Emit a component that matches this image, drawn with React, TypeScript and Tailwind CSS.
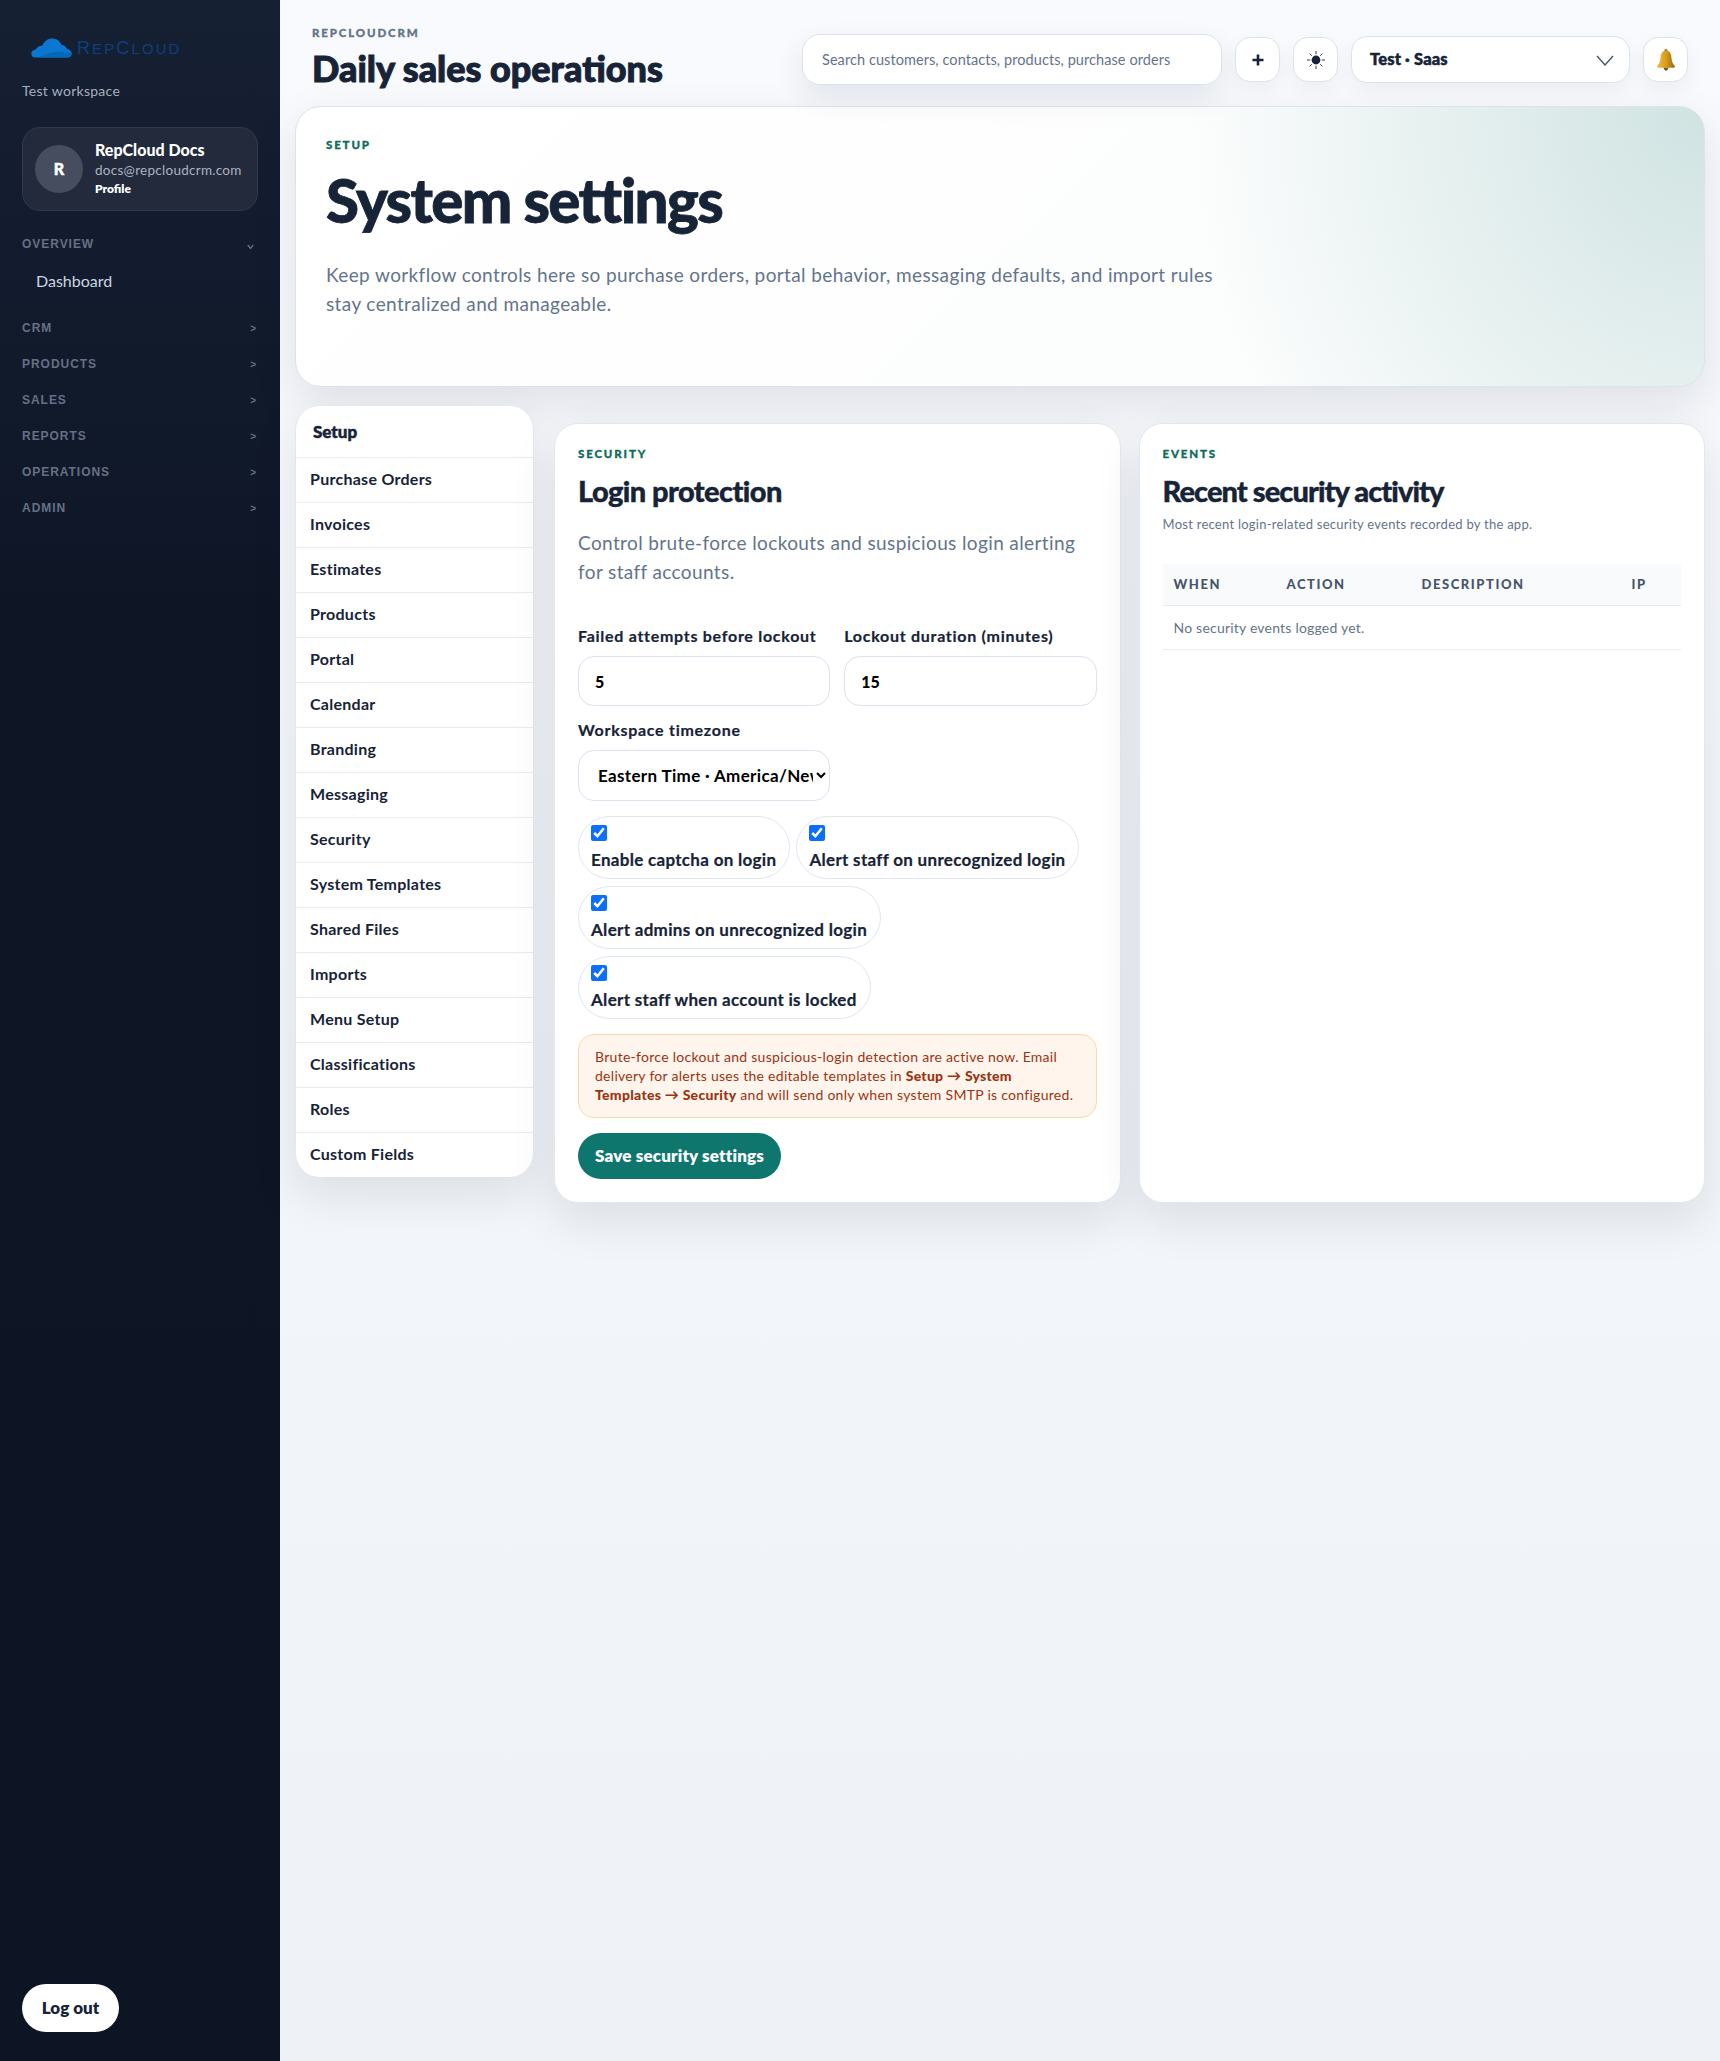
import React from "react";

const F = "font-['Lato','Noto_Sans',sans-serif]";
const navGroups = ["CRM", "PRODUCTS", "SALES", "REPORTS", "OPERATIONS", "ADMIN"];
const setupItems = ["Purchase Orders", "Invoices", "Estimates", "Products", "Portal", "Calendar", "Branding", "Messaging", "Security", "System Templates", "Shared Files", "Imports", "Menu Setup", "Classifications", "Roles", "Custom Fields"];
const CARD_SHADOW = "shadow-[0_18px_46px_rgba(15,23,42,0.1)]";

function Cloud() {
  return (
    <svg width="41" height="20" viewBox="0 0 41 20" className="shrink-0">
      <path d="M4 19.5C1.5 19.5 0.3 17.6 0.3 15.8 0.3 13.4 2.3 11.8 4.6 11.6 6.2 8.9 8.6 7.6 11.3 7.8 13 3 17 0.4 21.5 0.5 25.8 0.6 29 3 30.5 6.8 33 7 35 8.6 35.8 11 38.6 11.3 40.7 13.2 40.7 15.8 40.7 18 39 19.5 36.6 19.5Z" fill="#0a78d2" />
      <path d="M8 19.5C14 15.2 25 12.2 40.5 14.8 40.7 17.6 39 19.5 36.6 19.5Z" fill="#0668b8" />
    </svg>
  );
}

function Bell() {
  return (
    <svg width="24" height="24" viewBox="0 0 22 22">
      <defs>
        <linearGradient id="bellg" x1="0" y1="0" x2="1" y2="0">
          <stop offset="0" stopColor="#f2bd3a" />
          <stop offset="0.5" stopColor="#d99c1c" />
          <stop offset="1" stopColor="#96670d" />
        </linearGradient>
      </defs>
      <circle cx="11" cy="2.2" r="1.5" fill="#b9841a" />
      <path d="M11 2.5C7.6 2.5 6.4 5 6.1 8 5.8 11.6 5.2 14.3 3 16.4 2.5 17 2.8 18 3.8 18H18.2C19.2 18 19.5 17 19 16.4 16.8 14.3 16.2 11.6 15.9 8 15.6 5 14.4 2.5 11 2.5Z" fill="url(#bellg)" />
      <path d="M8.8 18.2C9 19.8 9.9 20.8 11 20.8 12.1 20.8 13 19.8 13.2 18.2Z" fill="#7d540e" />
    </svg>
  );
}

function Sun() {
  return (
    <svg width="20" height="20" viewBox="0 0 20 20">
      <circle cx="10" cy="10" r="4.4" fill="#172337" />
      <path d="M10 1V4.2M10 15.8V19M1 10H4.2M15.8 10H19M3.6 3.6L5.7 5.7M14.3 14.3L16.4 16.4M3.6 16.4L5.7 14.3M14.3 5.7L16.4 3.6" stroke="#172337" strokeWidth="0.9" />
    </svg>
  );
}

function Eyebrow({ children }: { children: React.ReactNode }) {
  return <div className="text-[11.5px] leading-[16px] font-black tracking-[0.16em] uppercase text-[#0f6b5c] [-webkit-text-stroke:0.3px_currentColor]">{children}</div>;
}

function Check({ label }: { label: string }) {
  return (
    <label className="inline-flex h-[63px] pl-[12px] pr-[13px] pt-[8px] rounded-[32px] border border-[#dfe6ef] bg-white">
      <div className="flex flex-col gap-[9px]">
        <input type="checkbox" defaultChecked className="m-0 w-[16px] h-[16px] accent-[#0b6ffb]" />
        <span className="text-[17px] leading-[20px] font-bold text-[#172337] whitespace-nowrap tracking-[0.018em] [-webkit-text-stroke:0.2px_currentColor]">{label}</span>
      </div>
    </label>
  );
}

function GroupChevron() {
  return <span className="text-[10px] font-bold tracking-normal pr-[2px] text-[#667085]">&gt;</span>;
}

export default function App() {
  return (
    <div className={`${F} flex w-full min-h-[2061px] bg-[linear-gradient(180deg,#f8fafd_0%,#eef2f7_100%)]`}>
      <aside className="w-[280px] shrink-0 min-h-[2061px] flex flex-col justify-between px-[22px] pt-[38px] pb-[29px] bg-[linear-gradient(180deg,#162033_0%,#0e1626_30%,#0d1424_100%)]">
        <div>
          <div className="flex items-center gap-[5px] h-[20px] pl-[9px]">
            <Cloud />
            <span className="font-['Liberation_Sans',sans-serif] text-[15px] leading-[20px] tracking-[0.14em] text-[#0b3f7d] whitespace-nowrap"><span className="text-[18px]">R</span>EP<span className="text-[18px]">C</span>LOUD</span>
          </div>
          <div className="mt-[24px] text-[14px] leading-[18px] text-[#a4afc0] tracking-[0.02em]">Test workspace</div>
          <div className="mt-[27px] h-[84px] flex items-center gap-[12px] pl-[12px] rounded-[18px] border border-[#303a4c] bg-[#222a3c]">
            <div className="w-[48px] h-[48px] rounded-full bg-[#454d5e] flex items-center justify-center text-white text-[16px] font-black [-webkit-text-stroke:0.5px_currentColor]">R</div>
            <div className="flex flex-col">
              <div className="text-[16px] leading-[20px] font-black text-white">RepCloud Docs</div>
              <div className="text-[13.5px] leading-[20px] text-[#a9b3c3] tracking-[0.02em]">docs@repcloudcrm.com</div>
              <div className="text-[12px] leading-[18px] font-extrabold text-white">Profile</div>
            </div>
          </div>
          <div className="mt-[25px] h-[16px] flex items-center justify-between pr-[4px] font-['Liberation_Sans',sans-serif] text-[12px] font-bold tracking-[0.08em] text-[#667085]">
            <span>OVERVIEW</span>
            <svg width="7" height="6" viewBox="0 0 7 6" className="mt-[6px]"><path d="M0.8 1L3.5 4.4L6.2 1" stroke="#667085" strokeWidth="1.3" fill="none" /></svg>
          </div>
          <div className="mt-[18px] pl-[14px] h-[22px] text-[16px] leading-[22px] text-[#cbd5e1]">Dashboard</div>
          <div className="mt-[18px] flex flex-col">
            {navGroups.map((g) => (
              <div key={g} className="h-[36px] shrink-0 flex items-center justify-between font-['Liberation_Sans',sans-serif] text-[12px] font-bold tracking-[0.08em] text-[#667085]">
                <span>{g}</span>
                <GroupChevron />
              </div>
            ))}
          </div>
        </div>
        <button className="w-[97px] h-[48px] rounded-full bg-white text-[#172337] text-[17px] font-extrabold">Log out</button>
      </aside>

      <main className="flex-1 min-w-0 px-[15px]">
        <header className="h-[106px] flex items-start pl-[17px] pr-[17px]">
          <div className="pt-[25px] flex-1">
            <div className="text-[11.5px] leading-[16px] font-black tracking-[0.16em] text-[#64748b] [-webkit-text-stroke:0.3px_currentColor]">REPCLOUDCRM</div>
            <div className="mt-[5px] text-[36px] leading-[44px] font-black tracking-normal text-[#172337] [-webkit-text-stroke:1px_currentColor] whitespace-nowrap">Daily sales operations</div>
          </div>
          <div className="flex items-center gap-[13px] pt-[34px] h-[85px]">
            <input placeholder="Search customers, contacts, products, purchase orders" className="w-[420px] h-[51px] px-[19px] rounded-[18px] border border-[#dbe3ee] bg-white text-[14.5px] tracking-[0.005em] outline-none placeholder:text-[#64748b] shadow-[0_12px_30px_rgba(15,23,42,0.09)]" />
            <button className="w-[45px] h-[45px] rounded-[15px] border border-[#dbe3ee] bg-white flex items-center justify-center shadow-[0_8px_20px_rgba(15,23,42,0.05)]">
              <svg width="14" height="14" viewBox="0 0 14 14"><path d="M7 1.5V12.5M1.5 7H12.5" stroke="#172337" strokeWidth="2.6" /></svg>
            </button>
            <button className="w-[45px] h-[45px] rounded-[15px] border border-[#dbe3ee] bg-white flex items-center justify-center shadow-[0_8px_20px_rgba(15,23,42,0.05)]"><Sun /></button>
            <div className="w-[279px] h-[47px] pl-[18px] pr-[15px] rounded-[16px] border border-[#dbe3ee] bg-white flex items-center justify-between shadow-[0_8px_20px_rgba(15,23,42,0.05)]">
              <span className="text-[16.5px] font-black text-[#172337] [-webkit-text-stroke:0.5px_currentColor] tracking-[0.01em]">Test · Saas</span>
              <svg width="18" height="11" viewBox="0 0 18 11" className="mt-[2px]"><path d="M1 1L9 10L17 1" stroke="#475569" strokeWidth="1.4" fill="none" /></svg>
            </div>
            <button className="w-[45px] h-[45px] rounded-[15px] border border-[#dbe3ee] bg-white flex items-center justify-center shadow-[0_8px_20px_rgba(15,23,42,0.05)]"><Bell /></button>
          </div>
        </header>

        <section className={`h-[281px] rounded-[26px] border border-[#dbe3ee] pt-[30px] pl-[30px] bg-[radial-gradient(ellipse_520px_560px_at_100%_0%,rgba(15,118,110,0.19),rgba(15,118,110,0)_100%),linear-gradient(135deg,#ffffff,#fbfcfc)] ${CARD_SHADOW}`}>
          <Eyebrow>Setup</Eyebrow>
          <h1 className="mt-[11px] text-[60px] leading-[72px] font-black tracking-[-0.027em] text-[#172337] [-webkit-text-stroke:0.8px_currentColor]">System settings</h1>
          <p className="mt-[24px] w-[905px] text-[19px] leading-[29px] text-[#64748b] tracking-[0.02em]">Keep workflow controls here so purchase orders, portal behavior, messaging defaults, and import rules stay centralized and manageable.</p>
        </section>

        <div className="mt-[20px] flex items-start gap-[20px]">
          <nav className={`w-[239px] -mt-[1px] shrink-0 rounded-[24px] bg-white overflow-hidden border-x border-[#e3e8ef] ${CARD_SHADOW}`}>
            <div className="h-[51px] pl-[17px] flex items-center text-[17px] font-black text-[#172337] [-webkit-text-stroke:0.5px_currentColor]">Setup</div>
            {setupItems.map((s) => (
              <div key={s} className="h-[45px] border-t border-[#e8ecf2] pl-[14px] pb-[2px] flex items-center text-[16px] font-bold tracking-[0.017em] text-[#172337]">{s}</div>
            ))}
          </nav>

          <div className="flex-1 mt-[16px] grid grid-cols-2 gap-[18px] h-[780px]">
            <section className={`rounded-[24px] bg-white border border-[#e3e8ef] px-[23px] pt-[22px] ${CARD_SHADOW}`}>
              <Eyebrow>Security</Eyebrow>
              <h2 className="mt-[11px] text-[29px] leading-[36px] font-black tracking-[-0.02em] text-[#172337] [-webkit-text-stroke:0.4px_currentColor]">Login protection</h2>
              <p className="mt-[19px] text-[19px] leading-[29px] text-[#64748b] tracking-[0.02em]">Control brute-force lockouts and suspicious login alerting for staff accounts.</p>
              <div className="mt-[40px] grid grid-cols-2 gap-x-[14px]">
                <div>
                  <div className="text-[16px] leading-[20px] font-bold text-[#172337] tracking-[0.045em] whitespace-nowrap [-webkit-text-stroke:0.2px_currentColor]">Failed attempts before lockout</div>
                  <input defaultValue="5" className="mt-[10px] w-full h-[50px] px-[16px] rounded-[16px] border border-[#dbe3ee] text-[16px] font-black text-black outline-none" />
                </div>
                <div>
                  <div className="text-[16px] leading-[20px] font-bold text-[#172337] tracking-[0.045em] whitespace-nowrap [-webkit-text-stroke:0.2px_currentColor]">Lockout duration (minutes)</div>
                  <input defaultValue="15" className="mt-[10px] w-full h-[50px] px-[16px] rounded-[16px] border border-[#dbe3ee] text-[16px] font-black text-black outline-none" />
                </div>
                <div className="mt-[14px]">
                  <div className="text-[16px] leading-[20px] font-bold text-[#172337] tracking-[0.045em] [-webkit-text-stroke:0.2px_currentColor]">Workspace timezone</div>
                  <select className="mt-[10px] w-full h-[51px] pl-[15px] pr-0 rounded-[16px] border border-[#dbe3ee] bg-white text-[17px] font-bold tracking-[0.02em] text-black outline-none">
                    <option>Eastern Time · America/New_York</option>
                  </select>
                </div>
              </div>
              <div className="mt-[15px] flex flex-wrap gap-x-[6px] gap-y-[7px]">
                <Check label="Enable captcha on login" />
                <Check label="Alert staff on unrecognized login" />
                <Check label="Alert admins on unrecognized login" />
                <Check label="Alert staff when account is locked" />
              </div>
              <div className="mt-[15px] h-[84px] rounded-[16px] border border-[#fdd9a8] bg-[#fff5ec] px-[16px] pt-[12px] text-[14px] leading-[19px] text-[#9a3412] tracking-[0.02em]">
                Brute-force lockout and suspicious-login detection are active now. Email delivery for alerts uses the editable templates in <strong className="font-black">Setup → System Templates → Security</strong> and will send only when system SMTP is configured.
              </div>
              <button className="mt-[15px] w-[203px] h-[46px] rounded-full bg-[#0f766e] text-white text-[17px] font-extrabold tracking-[0.01em]">Save security settings</button>
            </section>

            <section className={`rounded-[24px] bg-white border border-[#e3e8ef] px-[23px] pt-[22px] ${CARD_SHADOW}`}>
              <Eyebrow>Events</Eyebrow>
              <h2 className="mt-[11px] text-[29px] leading-[36px] font-black tracking-[-0.032em] text-[#172337] [-webkit-text-stroke:0.4px_currentColor]">Recent security activity</h2>
              <p className="mt-[6px] text-[13px] leading-[18px] text-[#64748b] tracking-[0.02em]">Most recent login-related security events recorded by the app.</p>
              <div className="mt-[31px] h-[42px] grid grid-cols-[113px_135px_210px_1fr] items-center pl-[11px] bg-[#f8fafc] border-b border-[#e8ecf2] text-[13px] font-black tracking-[0.12em] text-[#475569]">
                <span>WHEN</span><span>ACTION</span><span>DESCRIPTION</span><span>IP</span>
              </div>
              <div className="h-[44px] flex items-center pl-[11px] border-b border-[#e8ecf2] text-[14px] text-[#64748b] tracking-[0.015em]">No security events logged yet.</div>
            </section>
          </div>
        </div>
      </main>
    </div>
  );
}
